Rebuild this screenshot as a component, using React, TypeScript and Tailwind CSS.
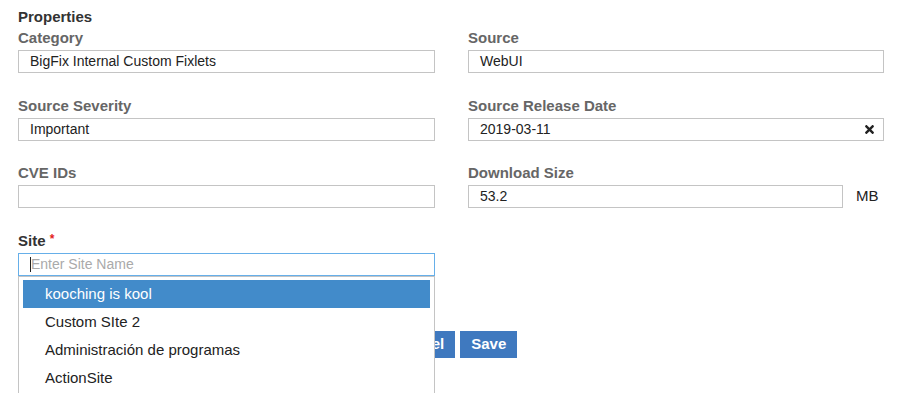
import React from "react";
import { FaTimes } from "react-icons/fa";

const boxCls = "h-[23px] border border-[#c4c4c4] bg-white px-[11px] text-[14px] leading-[21px] text-[#222]";

function Label({ children, dark }: { children: React.ReactNode; dark?: boolean }) {
  return (
    <div className={`h-[18px] text-[15px] font-bold leading-[18px] ${dark ? "text-[#333]" : "text-[#666]"}`}>
      {children}
    </div>
  );
}

function Field({ label, value }: { label: string; value?: string }) {
  return (
    <div>
      <Label>{label}</Label>
      <div className={`mt-[3px] ${boxCls}`}>{value}</div>
    </div>
  );
}

const sites = ["kooching is kool", "Custom SIte 2", "Administración de programas", "ActionSite"];

export default function App() {
  return (
    <div className="w-[905px] h-[393px] overflow-hidden bg-white px-[18px] pt-[8px] font-['Liberation_Sans',Arial,Helvetica,sans-serif]">
      <h3 className="h-[18px] text-[15px] font-bold leading-[18px] text-[#333]">Properties</h3>

      <div className="mt-[3px] grid grid-cols-[417px_416px] gap-x-[33px] gap-y-[23.5px]">
        <Field label="Category" value="BigFix Internal Custom Fixlets" />
        <Field label="Source" value="WebUI" />
        <Field label="Source Severity" value="Important" />

        {/* Date with clear button */}
        <div>
          <Label>Source Release Date</Label>
          <div className={`mt-[3px] flex items-center justify-between pr-[7px] ${boxCls}`}>
            <span>2019-03-11</span>
            <FaTimes className="text-[#222]" size={13} />
          </div>
        </div>

        <Field label="CVE IDs" />

        <div>
          <Label>Download Size</Label>
          <div className="mt-[3px] flex items-center">
            <div className={`w-[375px] ${boxCls}`}>53.2</div>
            <span className="ml-[13px] text-[15px] text-[#222]">MB</span>
          </div>
        </div>

        {/* Site typeahead */}
        <div className="relative">
          <Label dark>
            Site <span className="relative -top-[3px] text-[12px] text-[#e3221b]">*</span>
          </Label>
          <div className="mt-[3px] flex h-[23px] items-center border border-[#66afe9] bg-white pl-[11px] text-[14px]">
            <span className="h-[15px] w-px bg-[#222]" />
            <span className="text-[#aaa]">Enter Site Name</span>
          </div>
          <div className="absolute left-0 top-full z-10 h-[130px] w-full overflow-hidden border border-[#c4c4c4] bg-white px-[4px] pt-[3px]">
            {sites.map((s, i) => (
              <div
                key={s}
                className={`h-[28px] pl-[22px] text-[15px] leading-[28px] ${i === 0 ? "bg-[#428bca] text-white" : "text-[#222]"}`}
              >
                {s}
              </div>
            ))}
          </div>
        </div>
        <div />
      </div>

      <div className="mt-[55px] flex gap-[5px] pl-[366px]">
        <button className="h-[27px] bg-[#3f79bf] px-[11px] text-[15px] font-bold text-white">Cancel</button>
        <button className="h-[27px] bg-[#3f79bf] px-[11px] text-[15px] font-bold text-white">Save</button>
      </div>
    </div>
  );
}
